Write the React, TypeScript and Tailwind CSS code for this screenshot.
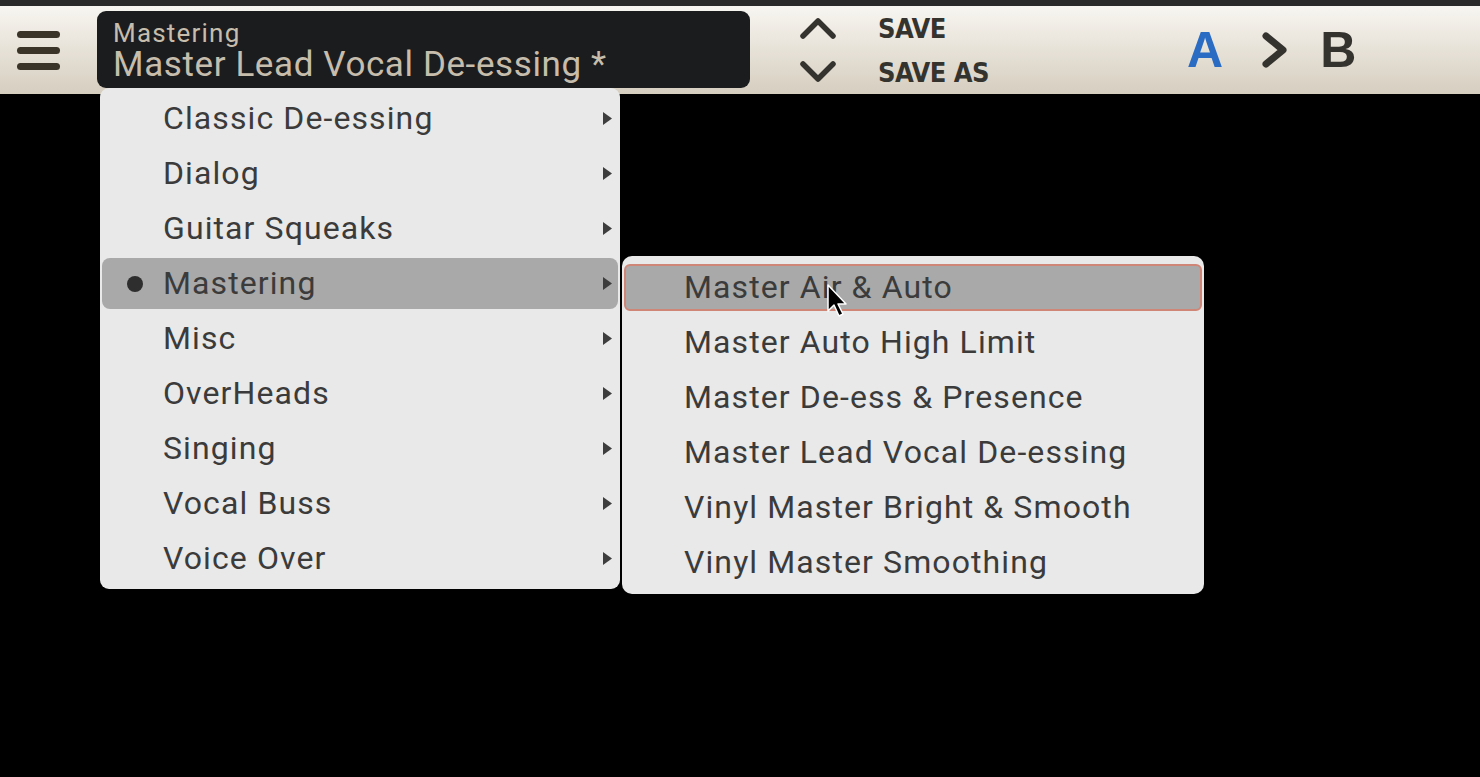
import React from "react";

const cats = [
  "Classic De-essing",
  "Dialog",
  "Guitar Squeaks",
  "Mastering",
  "Misc",
  "OverHeads",
  "Singing",
  "Vocal Buss",
  "Voice Over",
];

const subs = [
  "Master Air & Auto",
  "Master Auto High Limit",
  "Master De-ess & Presence",
  "Master Lead Vocal De-essing",
  "Vinyl Master Bright & Smooth",
  "Vinyl Master Smoothing",
];

const font = { fontFamily: "Roboto, 'Liberation Sans', sans-serif" };

function Arrow() {
  return (
    <svg width="9" height="13" viewBox="0 0 9 13">
      <path d="M0 0 L9 6.5 L0 13 Z" fill="#3d3d3d" />
    </svg>
  );
}

export default function App() {
  return (
    <div className="relative w-[1480px] h-[777px] bg-black overflow-hidden" style={font}>
      <div className="h-[6px] bg-[#2a2a2a]" />
      <div className="h-[88px] bg-gradient-to-b from-[#f8f6f1] to-[#d6cebf] flex items-center">
        <div className="w-[97px] flex flex-col items-start pl-[17px] gap-[9px]">
          <div className="w-[43px] h-[7px] rounded-full bg-[#3a3328]" />
          <div className="w-[43px] h-[7px] rounded-full bg-[#3a3328]" />
          <div className="w-[43px] h-[7px] rounded-full bg-[#3a3328]" />
        </div>
        <div className="w-[653px] h-[77px] mt-[-1px] bg-[#1b1c1e] rounded-[9px] pl-[16px] pt-[9px] flex flex-col justify-start text-[#c7bdac] overflow-hidden">
          <div className="text-[26px] leading-[27px] tracking-[1.2px] whitespace-nowrap">Mastering</div>
          <div className="text-[35px] leading-[36px] tracking-[0.6px] whitespace-nowrap">Master Lead Vocal De-essing *</div>
        </div>
        <div className="ml-[50px] flex flex-col gap-[22px]">
          <svg width="36" height="22" viewBox="0 0 36 22">
            <path d="M3 19 L18 4 L33 19" fill="none" stroke="#35332e" strokeWidth="5.5" strokeLinecap="round" strokeLinejoin="round" />
          </svg>
          <svg width="36" height="22" viewBox="0 0 36 22">
            <path d="M3 3 L18 18 L33 3" fill="none" stroke="#35332e" strokeWidth="5.5" strokeLinecap="round" strokeLinejoin="round" />
          </svg>
        </div>
        <div
          className="ml-[42px] flex flex-col gap-[13px] text-[27px] font-bold leading-[31px] tracking-[-0.5px] text-[#35332e]"
          style={{ fontFamily: "'Liberation Sans Narrow', 'DejaVu Sans Condensed', sans-serif" }}
        >
          <div>SAVE</div>
          <div>SAVE AS</div>
        </div>
        <div className="ml-[198px] flex items-center" style={{ fontFamily: "'Liberation Sans', sans-serif" }}>
          <span className="text-[50px] font-bold text-[#2a6cc4] leading-none">A</span>
          <svg className="ml-[38px]" width="28" height="36" viewBox="0 0 28 36">
            <path d="M5 4 L22 18 L5 32" fill="none" stroke="#35332e" strokeWidth="7" strokeLinecap="round" strokeLinejoin="round" />
          </svg>
          <span className="ml-[31px] text-[50px] font-bold text-[#35332e] leading-none">B</span>
        </div>
      </div>

      <div className="absolute left-[100px] top-[88px] flex items-start">
        <div className="w-[520px] bg-[#e9e9e9] rounded-[9px] py-[3px]">
          {cats.map((c) => {
            const sel = c === "Mastering";
            return (
              <div key={c} className="h-[55px] px-[2px] py-[2px]">
                <div className={`h-full rounded-[8px] flex items-center ${sel ? "bg-[#a9a9a9]" : ""}`}>
                  <div className="w-[61px] flex justify-center pr-[10px]">
                    {sel && <div className="w-[16px] h-[16px] rounded-full bg-[#2e2e2e] ml-[14px]" />}
                  </div>
                  <div className="flex-1 text-[32px] text-[#3b3b3b] tracking-[1.1px] leading-none mt-[-2px]">{c}</div>
                  <div className="pr-[6px] flex items-center">
                    <Arrow />
                  </div>
                </div>
              </div>
            );
          })}
        </div>
        <div className="ml-[2px] mt-[168px] w-[582px] bg-[#e9e9e9] rounded-[10px] py-[4px]">
          {subs.map((s, i) => {
            const sel = i === 0;
            return (
              <div key={s} className="h-[55px] px-[2px] py-[4px]">
                <div
                  className={`h-full rounded-[6px] flex items-center pl-[58px] ${
                    sel ? "bg-[#a9a9a9] border-2 border-[#cf8677]" : "border-2 border-transparent"
                  }`}
                >
                  <span className="text-[32px] text-[#3b3b3b] tracking-[1.1px] leading-none mt-[-2px]">{s}</span>
                </div>
              </div>
            );
          })}
        </div>
      </div>

      <svg className="absolute left-[826px] top-[283px]" width="24" height="40" viewBox="0 0 24 40">
        <path d="M2 2 L2 28 L8 22 L13 33 L17 31 L12 21 L20 21 Z" fill="#000" stroke="#fff" strokeWidth="1.5" strokeLinejoin="round" />
      </svg>
    </div>
  );
}
